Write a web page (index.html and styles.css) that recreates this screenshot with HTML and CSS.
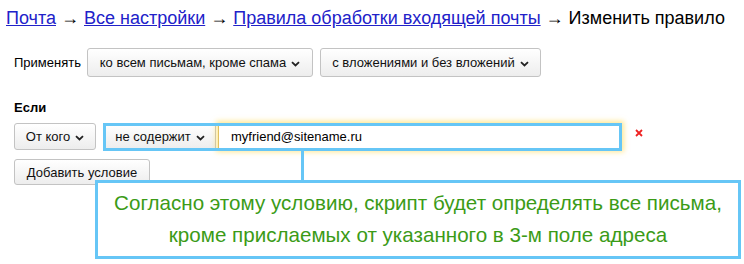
FILE: index.html
```html
<!DOCTYPE html>
<html lang="ru">
<head>
<meta charset="utf-8">
<title>Изменить правило</title>
<link rel="stylesheet" href="styles.css">
</head>
<body>
<div class="page">
  <div class="crumbs">
    <a href="#">Почта</a> → <a href="#">Все настройки</a> → <a href="#">Правила обработки входящей почты</a> → Изменить правило
  </div>

  <div class="row apply">
    <span class="label">Применять</span>
    <button class="btn btn-tall">ко всем письмам, кроме спама <svg class="chev" width="9" height="6" viewBox="0 0 9 6"><path d="M1 1.2 L4.5 4.5 L8 1.2" fill="none" stroke="#222" stroke-width="1.8"/></svg></button>
    <button class="btn btn-tall">с вложениями и без вложений <svg class="chev" width="9" height="6" viewBox="0 0 9 6"><path d="M1 1.2 L4.5 4.5 L8 1.2" fill="none" stroke="#222" stroke-width="1.8"/></svg></button>
  </div>

  <div class="if-title">Если</div>

  <div class="row cond">
    <button class="btn btn-from">От кого <svg class="chev" width="9" height="6" viewBox="0 0 9 6"><path d="M1 1.2 L4.5 4.5 L8 1.2" fill="none" stroke="#222" stroke-width="1.8"/></svg></button>
    <div class="hl">
      <button class="btn btn-op">не содержит <svg class="chev" width="9" height="6" viewBox="0 0 9 6"><path d="M1 1.2 L4.5 4.5 L8 1.2" fill="none" stroke="#222" stroke-width="1.8"/></svg></button>
      <div class="field">myfriend@sitename.ru</div>
      <div class="connector"></div>
    </div>
    <svg class="remove" width="8" height="8" viewBox="0 0 8 8"><path d="M1 1 L7 7 M7 1 L1 7" stroke="#ee2222" stroke-width="1.8"/></svg>
  </div>

  <div class="row add">
    <button class="btn btn-add">Добавить условие</button>
  </div>

  <div class="callout">Согласно этому условию, скрипт будет определять все письма,<br>кроме прислаемых от указанного в 3-м поле адреса</div>
</div>
</body>
</html>
```

FILE: styles.css
```css
html, body {
  margin: 0;
  padding: 0;
  background: #ffffff;
}

body {
  font-family: "Liberation Sans", Arial, sans-serif;
  color: #000;
}

.page {
  position: relative;
  width: 744px;
  height: 264px;
  overflow: hidden;
}

.crumbs {
  padding: 7px 0 0 6px;
  font-size: 18px;
  line-height: 22px;
  white-space: nowrap;
}

.crumbs a {
  color: #2121c9;
  text-decoration: underline;
}

.row {
  display: flex;
  align-items: center;
  padding-left: 14px;
}

.apply {
  margin-top: 19px;
  height: 29px;
}

.label {
  font-size: 13px;
  margin-right: 6px;
}

.btn {
  display: inline-flex;
  align-items: center;
  gap: 5px;
  box-sizing: border-box;
  font-family: "Liberation Sans", Arial, sans-serif;
  font-size: 13px;
  color: #111;
  background: linear-gradient(#ffffff, #ededed);
  border: 1px solid #c3c3c3;
  border-radius: 3px;
  padding: 0;
  margin: 0;
  white-space: nowrap;
  cursor: pointer;
}

.btn-tall {
  height: 29px;
  margin-right: 7px;
  width: 226px;
  justify-content: center;
}

.btn-tall + .btn-tall {
  width: 221px;
}

.chev {
  margin-top: 2px;
}

.if-title {
  margin: 23px 0 0 14px;
  font-size: 13px;
  font-weight: bold;
  line-height: 16px;
}

.cond {
  margin-top: 7px;
  height: 27px;
}

.btn-from {
  height: 27px;
  width: 82px;
  justify-content: center;
}

.hl {
  position: relative;
  display: flex;
  align-items: center;
  margin-left: 8px;
}

.hl::after {
  content: "";
  position: absolute;
  left: -1px;
  top: 0;
  right: 0;
  bottom: -1px;
  border: 3px solid #66c6f6;
  pointer-events: none;
}

.btn-op {
  height: 27px;
  width: 112px;
  justify-content: center;
  border-radius: 0;
}

.field {
  box-sizing: border-box;
  width: 404px;
  height: 27px;
  margin-left: 2px;
  padding-left: 12px;
  font-size: 13px;
  line-height: 25px;
  border: 1px solid #e0c060;
  background: #fff;
  box-shadow: 0 0 5px 2px rgba(255, 214, 60, 0.55);
}

.connector {
  position: absolute;
  left: 197px;
  top: 100%;
  width: 3px;
  height: 30px;
  background: #66c6f6;
}

.remove {
  margin-left: 13px;
  margin-top: -7px;
}

.add {
  margin-top: 9px;
}

.btn-add {
  height: 26px;
  width: 136px;
  justify-content: center;
}

.callout {
  position: absolute;
  left: 95px;
  top: 180px;
  width: 646px;
  height: 79px;
  box-sizing: border-box;
  border: 3px solid #66c6f6;
  background: #fff;
  color: #3b9b17;
  font-size: 20.6px;
  line-height: 32px;
  text-align: center;
  padding-top: 4px;
}
```
